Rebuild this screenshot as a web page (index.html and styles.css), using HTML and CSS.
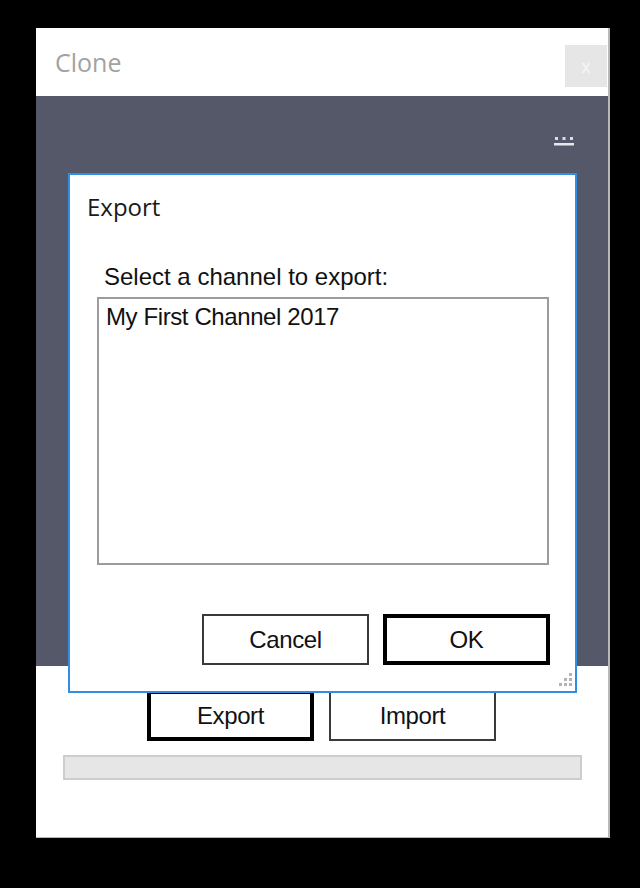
FILE: index.html
```html
<html>
<head>
<title>Clone</title>
<link rel="stylesheet" href="styles.css">
</head>
<body>
<div class="window">
  <div class="titlebar">
    <span class="title">Clone</span>
    <div class="close">x</div>
  </div>
  <div class="panel">
    <div class="more">
      <svg width="20" height="9" viewBox="0 0 20 9">
        <rect x="1" y="0" width="3" height="3" fill="#dcdce0"/>
        <rect x="8.5" y="0" width="3" height="3" fill="#dcdce0"/>
        <rect x="16" y="0" width="3" height="3" fill="#dcdce0"/>
        <rect x="0" y="6" width="20" height="2.5" fill="#e8e8ec"/>
      </svg>
    </div>
  </div>
  <div class="footer">
    <div class="actions">
      <div class="btn btn-default">Export</div>
      <div class="btn">Import</div>
    </div>
    <div class="progress"></div>
  </div>

  <div class="dialog">
    <div class="dlg-title">Export</div>
    <div class="dlg-body">
      <div class="label">Select a channel to export:</div>
      <div class="listbox">
        <div class="item">My First Channel 2017</div>
      </div>
      <div class="dlg-buttons">
        <div class="btn">Cancel</div>
        <div class="btn btn-default">OK</div>
      </div>
    </div>
    <svg class="grip" width="18" height="18" viewBox="0 0 18 18">
      <rect x="14" y="2" width="3" height="3" fill="#b4b4b4"/>
      <rect x="9" y="7" width="3" height="3" fill="#b4b4b4"/>
      <rect x="14" y="7" width="3" height="3" fill="#b4b4b4"/>
      <rect x="4" y="12" width="3" height="3" fill="#b4b4b4"/>
      <rect x="9" y="12" width="3" height="3" fill="#b4b4b4"/>
      <rect x="14" y="12" width="3" height="3" fill="#b4b4b4"/>
    </svg>
  </div>
</div>
</body>
</html>
```

FILE: styles.css
```css
body {
  margin: 0;
  background-color: #000000;
  font-family: "Liberation Sans", Arial, sans-serif;
}

.window {
  position: relative;
  box-sizing: border-box;
  width: 574px;
  height: 810px;
  margin: 28px 0 0 36px;
  background-color: #ffffff;
  border-right: 2px solid #b8b8b8;
  border-bottom: 1px solid #b8b8b8;
  display: flex;
  flex-direction: column;
}

.titlebar {
  height: 68px;
  display: flex;
  justify-content: space-between;
  align-items: center;
}

.title {
  font-family: "Open Sans", sans-serif;
  font-size: 25px;
  color: #a2a2a2;
  padding-left: 19px;
}

.close {
  align-self: flex-start;
  width: 42px;
  height: 42px;
  margin: 17px 1px 0 0;
  background-color: #e6e6e6;
  color: #f6f6f6;
  font-family: "Open Sans", sans-serif;
  font-size: 18px;
  display: flex;
  align-items: center;
  justify-content: center;
}

.panel {
  height: 570px;
  background-color: #545868;
}

.more {
  display: flex;
  justify-content: flex-end;
  padding: 41px 34px 0 0;
}

.footer {
  flex: 1;
  padding-top: 24px;
}

.actions {
  display: flex;
  justify-content: center;
  gap: 15px;
  padding-right: 1px;
}

.btn {
  box-sizing: border-box;
  width: 167px;
  height: 51px;
  border: 2px solid #3a3a3a;
  background-color: #ffffff;
  color: #111111;
  font-size: 24px;
  letter-spacing: -0.4px;
  display: flex;
  align-items: center;
  justify-content: center;
}

.btn-default {
  border: 4px solid #000000;
}

.progress {
  height: 25px;
  margin: 14px 26px 0 27px;
  box-sizing: border-box;
  background-color: #e6e6e6;
  border: 2px solid #cdcdcd;
}

/* modal export dialog floats over the window */
.dialog {
  position: absolute;
  left: 32px;
  top: 145px;
  box-sizing: border-box;
  width: 509px;
  height: 520px;
  background-color: #ffffff;
  border: 2px solid #2f8fe2;
}

.dlg-title {
  font-family: "Open Sans", sans-serif;
  font-size: 24px;
  line-height: 32px;
  color: #1a1a1a;
  padding: 16px 0 0 17px;
}

.dlg-body {
  padding: 40px 26px 0 27px;
}

.label {
  font-size: 24px;
  line-height: 28px;
  letter-spacing: 0;
  color: #111111;
  padding-left: 7px;
}

.listbox {
  box-sizing: border-box;
  height: 268px;
  margin-top: 6px;
  border: 2px solid #9c9c9c;
  padding: 4px 7px;
}

.item {
  font-size: 24px;
  line-height: 28px;
  letter-spacing: -0.4px;
  color: #111111;
}

.dlg-buttons {
  display: flex;
  justify-content: flex-end;
  gap: 14px;
  margin-top: 49px;
  margin-right: -1px;
}

.grip {
  position: absolute;
  right: 2px;
  bottom: 2px;
}
```
